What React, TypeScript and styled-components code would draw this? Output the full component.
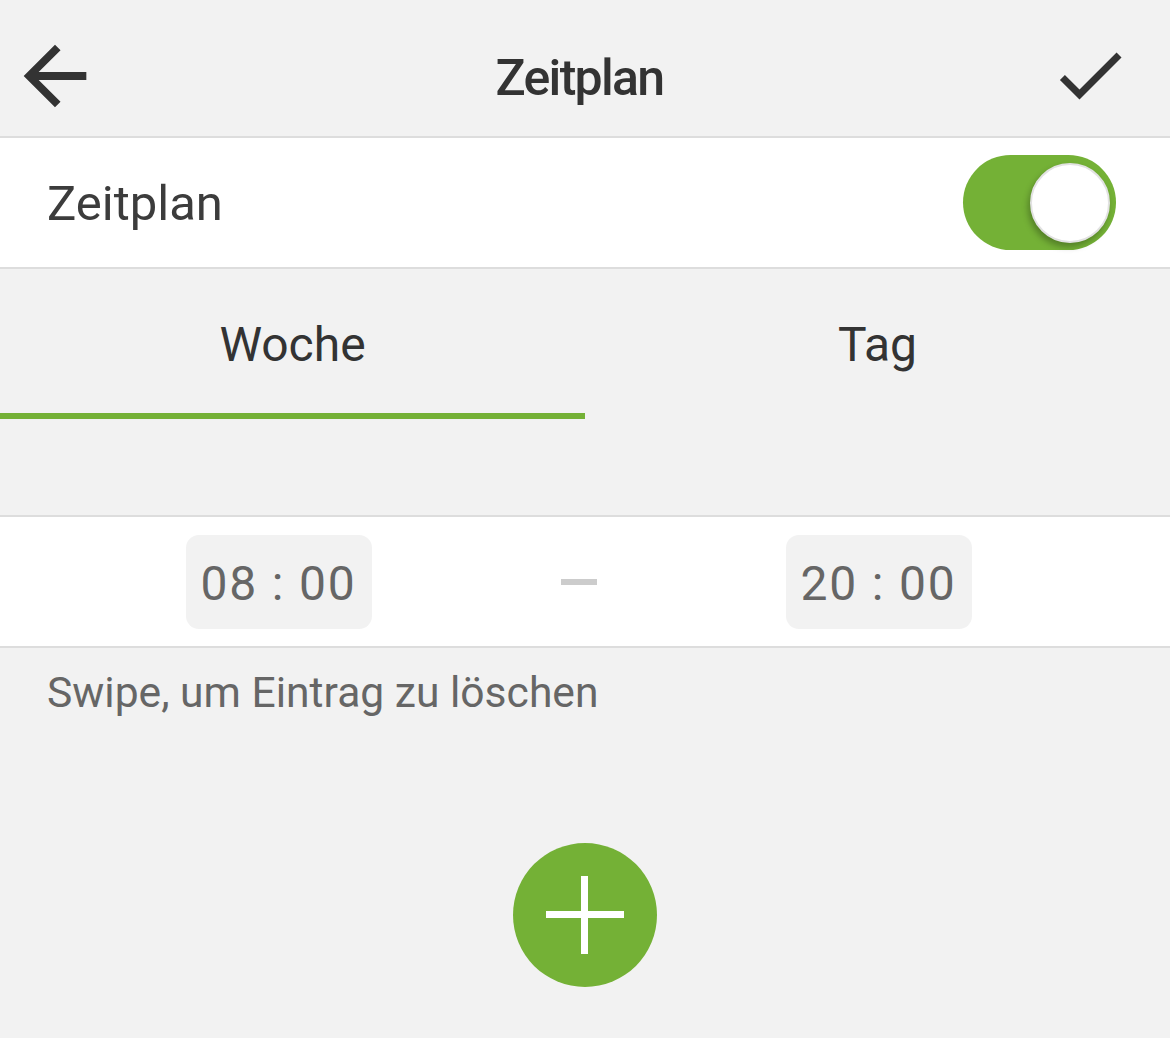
import React from "react";
import styled, { createGlobalStyle } from "styled-components";

const GREEN = "#74b136";

const Global = createGlobalStyle`
  html, body { margin: 0; padding: 0; background: #f2f2f2; }
  body { font-family: Roboto, "Noto Sans", "Liberation Sans", sans-serif; }
  * { box-sizing: border-box; }
`;

const Page = styled.div`
  width: 1170px;
  height: 1038px;
  background: #f2f2f2;
  display: flex;
  flex-direction: column;
  overflow: hidden;
`;

const Header = styled.header`
  height: 138px;
  flex: none;
  padding: 16px 38px 0 8px;
  display: flex;
  align-items: center;
  border-bottom: 2px solid #dddddd;
  background: #f2f2f2;
`;

const IconButton = styled.button<{ $size: number; $shift?: number }>`
  width: ${(p) => p.$size}px;
  height: ${(p) => p.$size}px;
  padding: 0;
  border: 0;
  background: transparent;
  display: flex;
  align-items: center;
  justify-content: center;
  flex: none;
  margin-top: ${(p) => p.$shift ?? 0}px;
  svg { display: block; width: 100%; height: 100%; }
`;

const Title = styled.h1`
  flex: 1;
  margin: 4px 0 0 0;
  padding-left: 9px;
  text-align: center;
  font-size: 50px;
  font-weight: 500;
  color: #333333;
  letter-spacing: -1.7px;
  line-height: 60px;
`;

const SwitchRow = styled.div`
  height: 131px;
  flex: none;
  background: #ffffff;
  border-bottom: 2px solid #dddddd;
  display: flex;
  align-items: center;
  justify-content: space-between;
  padding: 0 54px 0 47px;
`;

const RowLabel = styled.span`
  font-size: 49px;
  color: #3c3c3c;
  line-height: 60px;
  margin-top: 2px;
`;

const Track = styled.div<{ $on: boolean }>`
  width: 153px;
  height: 95px;
  border-radius: 48px;
  background: ${(p) => (p.$on ? GREEN : "#cccccc")};
  position: relative;
`;

const Knob = styled.div`
  position: absolute;
  top: 8px;
  right: 6px;
  width: 80px;
  height: 80px;
  border-radius: 50%;
  background: #ffffff;
  border: 2px solid #e2e2e2;
  box-shadow: -2px 4px 6px rgba(0, 0, 0, 0.28);
`;

const Tabs = styled.div`
  height: 150px;
  flex: none;
  display: flex;
`;

const Tab = styled.div<{ $active: boolean }>`
  flex: 1;
  display: flex;
  align-items: center;
  justify-content: center;
  font-size: 48px;
  color: #333333;
  border-bottom: 6px solid ${(p) => (p.$active ? GREEN : "transparent")};
  padding-top: 6px;
`;

const Spacer = styled.div`
  height: 98px;
  flex: none;
  border-bottom: 2px solid #dddddd;
`;

const TimeRow = styled.div`
  height: 131px;
  flex: none;
  background: #ffffff;
  border-bottom: 2px solid #dddddd;
  display: flex;
  align-items: center;
  justify-content: center;
  gap: 189px;
  padding-right: 13px;
`;

const TimeBox = styled.div`
  width: 186px;
  height: 94px;
  border-radius: 13px;
  background: #f2f2f2;
  display: flex;
  align-items: center;
  justify-content: center;
  font-size: 48px;
  letter-spacing: 1.8px;
  color: #666666;
  white-space: pre;
  padding-top: 3px;
`;

const Dash = styled.div`
  width: 36px;
  height: 6px;
  background: #cccccc;
`;

const Hint = styled.p`
  margin: 0;
  padding: 19px 0 0 47px;
  font-size: 42.6px;
  line-height: 50px;
  color: #666666;
`;

const FabArea = styled.div`
  flex: 1;
  display: flex;
  justify-content: center;
  padding-top: 126px;
`;

const Fab = styled.button`
  width: 144px;
  height: 144px;
  border-radius: 50%;
  border: 0;
  padding: 0;
  background: ${GREEN};
  display: flex;
  align-items: center;
  justify-content: center;
  svg { display: block; }
`;

export default function App() {
  return (
    <Page>
      <Global />
      <Header>
        <IconButton $size={94} aria-label="Zurück">
          <svg viewBox="0 0 24 24">
            <path fill="#333" d="M20 11H7.83l5.59-5.59L12 4l-8 8 8 8 1.41-1.41L7.83 13H20v-2z" />
          </svg>
        </IconButton>
        <Title>Zeitplan</Title>
        <IconButton $size={84} $shift={-2} aria-label="Speichern">
          <svg viewBox="0 0 24 24">
            <path fill="#333" d="M9 16.17L4.83 12l-1.42 1.41L9 19 21 7l-1.41-1.41z" />
          </svg>
        </IconButton>
      </Header>
      <SwitchRow>
        <RowLabel>Zeitplan</RowLabel>
        <Track $on>
          <Knob />
        </Track>
      </SwitchRow>
      <Tabs>
        <Tab $active>Woche</Tab>
        <Tab $active={false}>Tag</Tab>
      </Tabs>
      <Spacer />
      <TimeRow>
        <TimeBox>{"08 : 00"}</TimeBox>
        <Dash />
        <TimeBox>{"20 : 00"}</TimeBox>
      </TimeRow>
      <Hint>Swipe, um Eintrag zu löschen</Hint>
      <FabArea>
        <Fab aria-label="Hinzufügen">
          <svg width="78" height="78" viewBox="0 0 78 78">
            <rect x="35" y="0" width="7" height="78" fill="#fff" />
            <rect x="0" y="35" width="78" height="7" fill="#fff" />
          </svg>
        </Fab>
      </FabArea>
    </Page>
  );
}
